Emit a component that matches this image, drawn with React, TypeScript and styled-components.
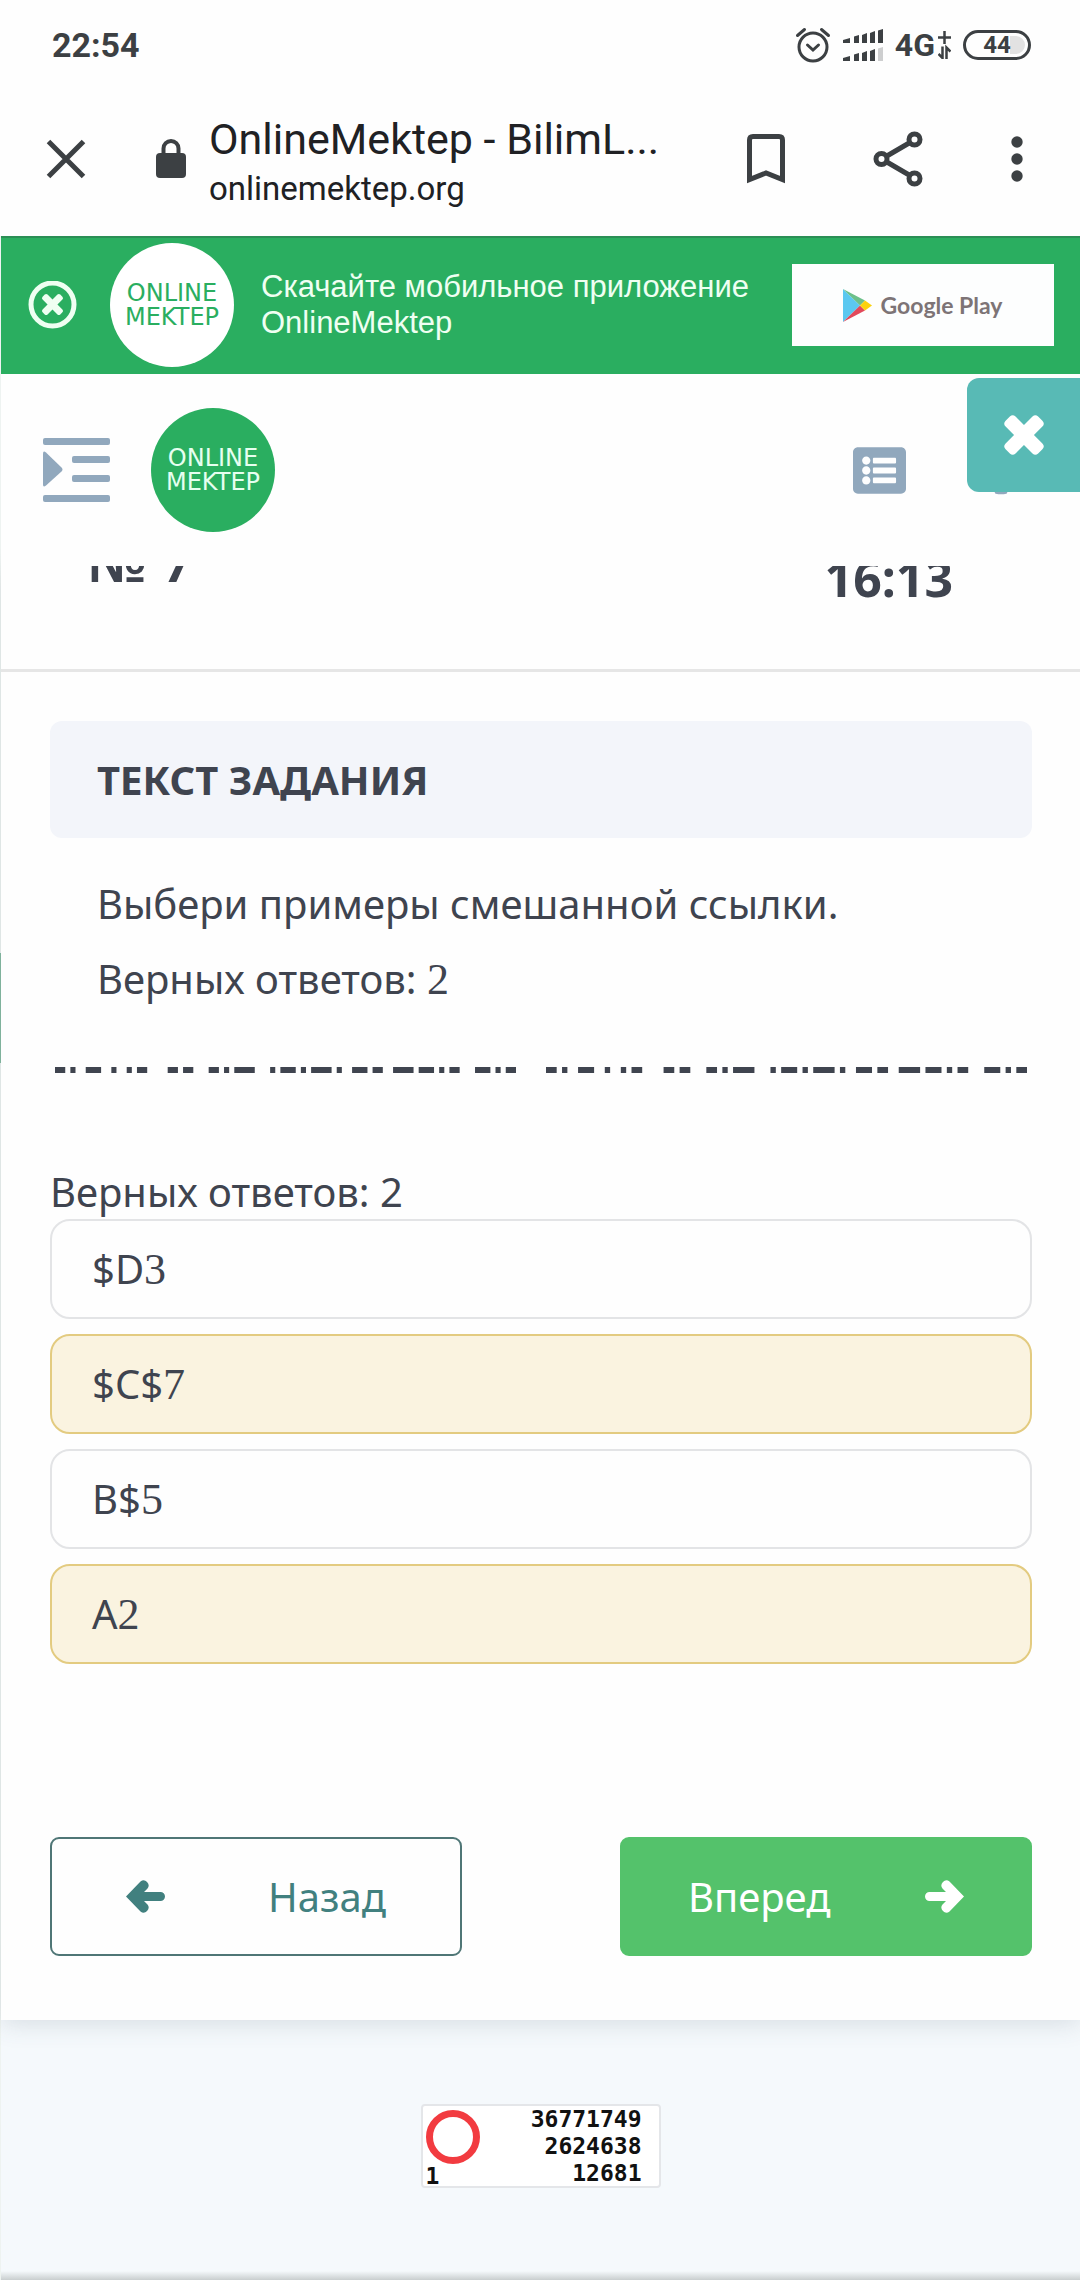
import React, { useState } from 'react';
import styled, { createGlobalStyle } from 'styled-components';
import { FaCog, FaListAlt } from 'react-icons/fa';

const colors = {
  ink: '#3f444f',
  chrome: '#3c4043',
  green: '#2aae60',
  slate: '#91a8bd',
  teal: '#58bab5',
  pine: '#41807f',
  next: '#54c26b',
  line: '#e6e6e6',
};

const GlobalStyle = createGlobalStyle`
  * { box-sizing: border-box; }
  body {
    margin: 0;
    background: #f5f9fc;
    color: ${colors.ink};
    font-family: "Noto Sans", "Open Sans", sans-serif;
    font-size: 40px;
  }
  button, input { font: inherit; color: inherit; }
  h1, h2, p { margin: 0; font-weight: 400; }
  svg { display: block; flex: none; }
`;

const StatusBar = styled.div`
  display: flex;
  align-items: center;
  justify-content: space-between;
  height: 90px;
  padding: 0 49px 0 52px;
  background: #fefefe;
  color: ${colors.chrome};
  font: 700 34px/40px Roboto, sans-serif;
`;

const StatusIcons = styled.div`
  display: flex;
  align-items: center;
  gap: 12px;
`;

const Network = styled.span`
  display: flex;
  align-items: center;
  gap: 3px;
  font-size: 32px;
`;

const Battery = styled.span`
  width: 68px;
  height: 30px;
  border: 3px solid ${colors.chrome};
  border-radius: 15px;
  background: linear-gradient(to right, transparent 44px, #e2e2e2 44px) padding-box;
  box-shadow: inset 0 0 0 3px #fefefe;
  font-size: 24px;
  line-height: 25px;
  text-align: center;
`;

const Toolbar = styled.header`
  display: flex;
  align-items: center;
  height: 146px;
  padding: 0 57px 8px 46px;
  background: #fefefe;
  color: ${colors.chrome};
  font-family: Roboto, sans-serif;
`;

const IconButton = styled.button`
  display: flex;
  flex: none;
  padding: 0;
  border: 0;
  background: none;
  color: inherit;
  cursor: pointer;
`;

const Site = styled.div`
  display: flex;
  flex: 1;
  align-items: center;
  gap: 23px;
  min-width: 0;
  margin-left: 70px;
`;

const SiteText = styled.div`
  min-width: 0;
  padding-top: 4px;
  color: #202124;
  white-space: nowrap;
`;

const PageTitle = styled.h1`
  font-size: 43px;
  line-height: 56px;
`;

const Address = styled.p`
  font-size: 33px;
  line-height: 44px;
`;

const ToolbarActions = styled.div`
  display: flex;
  align-items: center;
  gap: 88px;
`;

const Page = styled.div`
  position: relative;
  border-left: 1px solid #eef3f1;
`;

const Banner = styled.aside`
  display: flex;
  align-items: center;
  height: 138px;
  padding: 0 26px 2px 27px;
  border-top: 2px solid #2b8f55;
  background: ${colors.green};
  color: #effff2;
`;

const Logo = styled.a<{ $inverse?: boolean }>`
  display: flex;
  flex: none;
  flex-direction: column;
  align-items: center;
  justify-content: center;
  width: 124px;
  height: 124px;
  border-radius: 50%;
  background: ${({ $inverse }) => ($inverse ? '#fff' : colors.green)};
  color: ${({ $inverse }) => ($inverse ? colors.green : '#e6fff0')};
  font: 24px/24px "DejaVu Sans", sans-serif;
  text-decoration: none;
`;

const BannerLogo = styled.div`
  margin: 0 27px 0 33px;
`;

const BannerText = styled.p`
  flex: 1;
  font: 31px/36px "Liberation Sans", Arial, sans-serif;
`;

const StoreLink = styled.a`
  display: flex;
  align-items: center;
  justify-content: center;
  gap: 8px;
  width: 262px;
  height: 82px;
  background: #fdfefe;
  color: #7d7476;
  font: 700 23px/30px Lato, sans-serif;
  text-decoration: none;
`;

const Nav = styled.nav`
  position: relative;
  display: flex;
  align-items: center;
  justify-content: space-between;
  height: 192px;
  padding: 0 54px 0 42px;
  background: #fefefe;
  color: ${colors.slate};
`;

const NavGroup = styled.div<{ $gap: number }>`
  display: flex;
  align-items: center;
  gap: ${({ $gap }) => $gap}px;
`;

const CloseTab = styled.button`
  position: absolute;
  top: 4px;
  right: 0;
  display: flex;
  align-items: center;
  justify-content: center;
  width: 113px;
  height: 114px;
  padding: 0;
  border: 0;
  border-radius: 12px 0 0 12px;
  background: ${colors.teal};
  color: #fff;
  cursor: pointer;
`;

const Card = styled.main`
  background: #fefefe;
  box-shadow: 0 4px 24px rgba(60, 80, 100, 0.16);
`;

const TaskBar = styled.div`
  height: 106px;
  overflow: hidden;
  border-bottom: 3px solid ${colors.line};
`;

const TaskBarRow = styled.div`
  display: flex;
  align-items: flex-start;
  justify-content: space-between;
  margin-top: -18px;
  padding: 0 127px 0 86px;
`;

const TaskNumber = styled.h2`
  font-size: 58px;
  font-weight: 600;
  line-height: 24px;
`;

const Timer = styled.time`
  font-size: 50px;
  font-weight: 700;
  line-height: 60px;
`;

const Content = styled.div`
  padding: 49px 48px 64px 49px;
`;

const SectionTitle = styled.h2`
  padding: 32px 47px;
  border-radius: 12px;
  background: #f3f5fa;
  font-size: 40px;
  font-weight: 700;
  line-height: 53px;
`;

const TaskText = styled.div`
  margin: 28px 47px 51px;
  line-height: 75px;
`;

const Digit = styled.span`
  font-family: "Liberation Serif", serif;
  font-size: 44px;
  line-height: 1;
`;

const Divider = styled.div`
  display: flex;
  gap: 30px;
  height: 6px;
  padding: 0 5px;
`;

const DashRow = styled.svg<{ $share: number }>`
  flex: ${({ $share }) => $share};
  width: 0;
  height: 6px;
  fill: ${colors.ink};
`;

const Answers = styled.fieldset`
  min-width: 0;
  margin: 91px 0 173px;
  padding: 0;
  border: 0;
`;

const Legend = styled.legend`
  padding: 0;
  line-height: 55px;
`;

const AnswerList = styled.div`
  display: grid;
  gap: 15px;
`;

const Answer = styled.label<{ $selected: boolean }>`
  display: block;
  height: 100px;
  padding: 0 40px;
  border: 2px solid ${({ $selected }) => ($selected ? '#e3cb80' : '#e3e4e6')};
  border-radius: 20px;
  background: ${({ $selected }) => ($selected ? '#faf3e0' : '#fefefe')};
  line-height: 96px;
  cursor: pointer;
`;

const HiddenCheck = styled.input`
  position: absolute;
  width: 1px;
  height: 1px;
  margin: 0;
  opacity: 0;
`;

const Steps = styled.div`
  display: grid;
  grid-template-columns: 1fr 1fr;
  gap: 158px;
`;

const StepButton = styled.button<{ $primary?: boolean }>`
  display: flex;
  align-items: center;
  justify-content: space-between;
  height: 119px;
  padding: 0 ${({ $primary }) => ($primary ? 66 : 74)}px;
  border: 2px solid ${({ $primary }) => ($primary ? colors.next : '#4f7676')};
  border-radius: 9px;
  background: ${({ $primary }) => ($primary ? colors.next : '#fefefe')};
  color: ${({ $primary }) => ($primary ? '#fff' : colors.pine)};
  cursor: pointer;
`;

const SideTab = styled.span`
  position: absolute;
  top: 717px;
  left: -1px;
  width: 1px;
  height: 110px;
  background: #7fb29c;
`;

const Footer = styled.footer`
  display: flex;
  justify-content: center;
  padding: 84px 0 92px;
  background: linear-gradient(to top, #c9cecf, #f5f9fc00 9px);
`;

const Counter = styled.a`
  display: flex;
  justify-content: space-between;
  width: 240px;
  height: 84px;
  padding: 0 17px 0 3px;
  border: 2px solid #e4e6e9;
  border-radius: 4px;
  background: #fff;
  color: #111;
  font: 700 23px/27px "DejaVu Sans Mono", monospace;
  text-decoration: none;
`;

const CounterRank = styled.span`
  display: flex;
  flex-direction: column;
  padding-top: 4px;
  line-height: 20px;
`;

const CounterValues = styled.span`
  display: flex;
  flex-direction: column;
  align-items: flex-end;
`;

const AlarmIcon = () => (
  <svg width="36" height="36" viewBox="0 0 36 36" fill="none" stroke="currentColor" strokeWidth="3" strokeLinecap="round">
    <circle cx="18" cy="20" r="14" />
    <path d="M12.5 18l5.5 5 5.5-5M2.5 8.5l7-6M33.500 8.500l-7-6" />
  </svg>
);

const SignalIcon = () => (
  <svg width="40" height="32" viewBox="0 0 40 32" fill="currentColor">
    <path d="M0 14v-3l7-2v5zM11 14V7.500l5-1.500v8zM19 14V6l5-2v10zM27 14V4l5-2v12zM35 14V1.500l5-1.500v14z" />
    <path d="M0 32v-3l7-2v5zM11 32v-6.500l5-1.500v8zM19 32v-8l5-2v10zM27 32V22l5-2v12z" />
    <path d="M35 32V19.500l5-1.500v14z" opacity=".25" />
  </svg>
);

const DataIcon = () => (
  <svg width="13" height="28" viewBox="0 0 13 28" fill="none" stroke="currentColor" strokeWidth="2.500">
    <path d="M6.500 0v13M0 6.500h13M4.500 15.500v11.500l-4-4M8.500 28V16.500l4 4" />
  </svg>
);

const CrossIcon = () => (
  <svg width="40" height="40" viewBox="0 0 40 40" stroke="currentColor" strokeWidth="5">
    <path d="M2.500 2.500l35 35M37.500 2.500l-35 35" />
  </svg>
);

const LockIcon = () => (
  <svg width="30" height="40" viewBox="0 0 30 40">
    <rect y="14" width="30" height="25" rx="4" fill="currentColor" />
    <path d="M7.500 16V9.500a7.500 7.500 0 0 1 15 0V16" fill="none" stroke="currentColor" strokeWidth="4" />
  </svg>
);

const BookmarkIcon = () => (
  <svg width="38" height="50" viewBox="0 0 38 50" fill="none" stroke="currentColor" strokeWidth="5">
    <path d="M2.500 45.500V6q0-3.500 3.500-3.500h26q3.500 0 3.500 3.500v39.500L19 39z" />
  </svg>
);

const ShareIcon = () => (
  <svg width="50" height="56" viewBox="0 0 50 56" fill="none" stroke="currentColor" strokeWidth="5">
    <circle cx="8.500" cy="28" r="5.500" />
    <circle cx="41.500" cy="8.500" r="5.500" />
    <circle cx="41.500" cy="47.500" r="5.500" />
    <path d="M13 25.500l24-14M13 30.500l24 14" />
  </svg>
);

const DotsIcon = () => (
  <svg width="12" height="46" viewBox="0 0 12 46" fill="currentColor">
    <circle cx="6" cy="6" r="5.700" />
    <circle cx="6" cy="23" r="5.700" />
    <circle cx="6" cy="40" r="5.700" />
  </svg>
);

const HideIcon = () => (
  <svg width="49" height="49" viewBox="0 0 49 49">
    <circle cx="24.500" cy="23.500" r="21.500" fill="none" stroke="currentColor" strokeWidth="5" />
    <g fill="currentColor">
      <rect x="12" y="20" width="25" height="7" rx="2" transform="rotate(45 24.500 23.500)" />
      <rect x="12" y="20" width="25" height="7" rx="2" transform="rotate(-45 24.500 23.500)" />
    </g>
  </svg>
);

const IndentIcon = () => (
  <svg width="67" height="64" viewBox="0 0 67 64" fill="currentColor">
    <rect width="67" height="7" rx="2" />
    <rect x="29" y="18" width="38" height="7" rx="2" />
    <rect x="29" y="37" width="38" height="7" rx="2" />
    <rect y="57" width="67" height="7" rx="2" />
    <path d="M0 16q0-4 3-1.500l15.500 15q2 2 0 4l-15.500 14q-3 2.500-3-1z" />
  </svg>
);

const BoldCrossIcon = () => (
  <svg width="42" height="42" viewBox="0 0 42 42" fill="currentColor">
    <rect x="-2" y="14" width="46" height="14" rx="4" transform="rotate(45 21 21)" />
    <rect x="-2" y="14" width="46" height="14" rx="4" transform="rotate(-45 21 21)" />
  </svg>
);

const PlayIcon = () => (
  <svg width="29" height="33" viewBox="0 0 29 33">
    <path d="M0 0v33l17-16.500z" fill="#5bc8f0" />
    <path d="M0 0l17 16.500 5-5z" fill="#6cc08a" />
    <path d="M0 33l17-16.500 5 5z" fill="#e2495b" />
    <path d="M22 11.500l7 5-7 5-5-5z" fill="#fbd20c" />
  </svg>
);

const ArrowIcon = ({ right }: { right?: boolean }) => (
  <svg width="39" height="33" viewBox="0 0 39 33" fill="currentColor">
    <path
      transform={right ? 'matrix(-1 0 0 1 39 0)' : undefined}
      d="M0 16.500L14.500 1.500A5 5 0 0 1 21.500 8.500L18 12H34.500A4.500 4.500 0 0 1 34.500 21H18L21.500 24.500A5 5 0 0 1 14.500 31.500Z"
    />
  </svg>
);

const RingIcon = () => (
  <svg width="56" height="56" viewBox="0 0 56 56" fill="none" stroke="#f23b40" strokeWidth="7">
    <circle cx="27" cy="27" r="23.500" />
  </svg>
);

// Start and end of every dash, in units of a 90-unit row.
const dashes = [
  [0, 2], [3, 4], [6, 9], [11, 12], [14, 15], [16, 18], [22, 24], [25, 27], [30, 32],
  [33, 34], [35, 39], [42, 43], [44, 47], [48, 49], [50, 54], [55, 56], [58, 61],
  [62, 64], [66, 70], [71, 74], [75, 76], [77, 79], [82, 85], [86, 87], [88, 90],
];

const Dashes = ({ share }: { share: number }) => (
  <DashRow $share={share} viewBox="0 0 90 1" preserveAspectRatio="none" aria-hidden="true">
    {dashes.map(([from, to]) => (
      <rect key={from} x={from} width={to - from} height="1" />
    ))}
  </DashRow>
);

const options = [
  { text: '$D', digit: '3' },
  { text: '$C$', digit: '7' },
  { text: 'B$', digit: '5' },
  { text: 'A', digit: '2' },
];

export default function App() {
  const [selected, setSelected] = useState([1, 3]);
  const toggle = (index: number) =>
    setSelected((now) => (now.includes(index) ? now.filter((i) => i !== index) : [...now, index]));

  return (
    <>
      <GlobalStyle />
      <StatusBar>
        <span>22:54</span>
        <StatusIcons>
          <AlarmIcon />
          <SignalIcon />
          <Network>4G<DataIcon /></Network>
          <Battery>44</Battery>
        </StatusIcons>
      </StatusBar>
      <Toolbar>
        <IconButton aria-label="Закрыть"><CrossIcon /></IconButton>
        <Site>
          <LockIcon />
          <SiteText>
            <PageTitle>OnlineMektep - BilimL...</PageTitle>
            <Address>onlinemektep.org</Address>
          </SiteText>
        </Site>
        <ToolbarActions>
          <IconButton aria-label="Закладка"><BookmarkIcon /></IconButton>
          <IconButton aria-label="Поделиться"><ShareIcon /></IconButton>
          <IconButton aria-label="Меню"><DotsIcon /></IconButton>
        </ToolbarActions>
      </Toolbar>
      <Page>
        <Banner>
          <IconButton aria-label="Скрыть"><HideIcon /></IconButton>
          <BannerLogo>
            <Logo href="#" $inverse><span>ONLINE</span><span>MEKTEP</span></Logo>
          </BannerLogo>
          <BannerText>Скачайте мобильное приложение<br />OnlineMektep</BannerText>
          <StoreLink href="#"><PlayIcon />Google Play</StoreLink>
        </Banner>
        <Nav>
          <NavGroup $gap={41}>
            <IconButton aria-label="Разделы"><IndentIcon /></IconButton>
            <Logo href="#"><span>ONLINE</span><span>MEKTEP</span></Logo>
          </NavGroup>
          <NavGroup $gap={70}>
            <IconButton aria-label="Список"><FaListAlt size={53} /></IconButton>
            <IconButton aria-label="Настройки"><FaCog size={50} /></IconButton>
          </NavGroup>
          <CloseTab aria-label="Закрыть панель"><BoldCrossIcon /></CloseTab>
        </Nav>
        <Card>
          <TaskBar>
            <TaskBarRow>
              <TaskNumber>№ 7</TaskNumber>
              <Timer>16:13</Timer>
            </TaskBarRow>
          </TaskBar>
          <Content>
            <SectionTitle>ТЕКСТ ЗАДАНИЯ</SectionTitle>
            <TaskText>
              <p>Выбери примеры смешанной ссылки.</p>
              <p>Верных ответов: <Digit>2</Digit></p>
            </TaskText>
            <Divider><Dashes share={461} /><Dashes share={481} /></Divider>
            <Answers>
              <Legend>Верных ответов: 2</Legend>
              <AnswerList>
                {options.map(({ text, digit }, index) => (
                  <Answer key={text} $selected={selected.includes(index)}>
                    <HiddenCheck
                      type="checkbox"
                      checked={selected.includes(index)}
                      onChange={() => toggle(index)}
                    />
                    {text}<Digit>{digit}</Digit>
                  </Answer>
                ))}
              </AnswerList>
            </Answers>
            <Steps>
              <StepButton><ArrowIcon />Назад</StepButton>
              <StepButton $primary>Вперед<ArrowIcon right /></StepButton>
            </Steps>
          </Content>
        </Card>
        <SideTab />
        <Footer>
          <Counter href="#">
            <CounterRank><RingIcon />1</CounterRank>
            <CounterValues>
              <span>36771749</span>
              <span>2624638</span>
              <span>12681</span>
            </CounterValues>
          </Counter>
        </Footer>
      </Page>
    </>
  );
}
